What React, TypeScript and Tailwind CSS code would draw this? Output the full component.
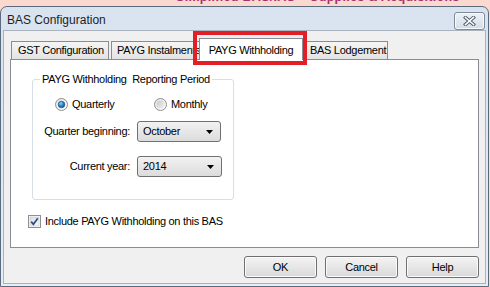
import React from "react";

function Radio({ checked }: { checked?: boolean }) {
  return (
    <svg width="13" height="13" viewBox="0 0 13 13" className="shrink-0">
      <defs>
        <linearGradient id={checked ? "rbg1" : "rbg0"} x1="0" y1="0" x2="1" y2="1">
          <stop offset="0" stopColor="#e2e2e2" />
          <stop offset="1" stopColor="#ffffff" />
        </linearGradient>
        <radialGradient id="rdot" cx="0.4" cy="0.35" r="0.7">
          <stop offset="0" stopColor="#8fd9ff" />
          <stop offset="0.5" stopColor="#2d86c7" />
          <stop offset="1" stopColor="#174d86" />
        </radialGradient>
        <linearGradient id="rgray" x1="0" y1="0" x2="1" y2="1">
          <stop offset="0" stopColor="#c9c9c9" />
          <stop offset="1" stopColor="#f3f3f3" />
        </linearGradient>
      </defs>
      <circle cx="6.5" cy="6.5" r="6" fill={`url(#${checked ? "rbg1" : "rbg0"})`} stroke="#8e8f8f" />
      {checked ? (
        <circle cx="6.5" cy="6.5" r="3.3" fill="url(#rdot)" stroke="#1f4f7f" strokeWidth="0.6" />
      ) : (
        <circle cx="6.5" cy="6.5" r="4" fill="url(#rgray)" />
      )}
    </svg>
  );
}

function Combo({ value, width }: { value: string; width: string }) {
  return (
    <div
      className={`${width} h-[21px] flex items-center justify-between pl-[5px] pr-[7px] rounded-[3px] border border-[#707070] bg-gradient-to-b from-[#f2f2f2] to-[#dcdcdc]`}
    >
      <span>{value}</span>
      <svg width="7" height="4" viewBox="0 0 7 4">
        <polygon points="0,0 7,0 3.5,4" fill="#000" />
      </svg>
    </div>
  );
}

function Button({ label }: { label: string }) {
  return (
    <div className="w-[73px] h-[22px] flex items-center justify-center rounded-[3px] border border-[#707070] bg-gradient-to-b from-[#f4f4f4] to-[#d9d9d9] shadow-[inset_0_0_0_1px_#fbfbfb]">
      {label}
    </div>
  );
}

export default function App() {
  return (
    <div className="relative w-[490px] h-[287px] overflow-hidden bg-[#fcd9cf] font-['Liberation_Sans',Arial,sans-serif] text-black">
      {/* page behind the dialog, mostly hidden */}
      <div className="h-[6px] overflow-hidden pl-[176px]">
        <div className="-mt-[9px] text-[12.5px] font-bold leading-[12px] tracking-[0.3px] text-[#a3326f] whitespace-nowrap">
          Simplified BAS/IAS – Supplies &amp; Acquisitions
        </div>
      </div>

      {/* dialog window */}
      <div className="w-[489px] h-[281px] flex flex-col rounded-t-[7px] border border-[#5b6b7e] bg-gradient-to-b from-[#d8e3ef] to-[#e6edf5]">
        <div className="h-[23px] flex items-center justify-between pl-[6px] pr-[3px]">
          <span className="text-[12px] text-[#1e1e1e] mt-[2px]">BAS Configuration</span>
          <div className="w-[31px] h-[18px] mt-[4px] flex items-center justify-center rounded-[3px] border border-[#7d8a99] bg-gradient-to-b from-[#eef2f7] to-[#d3dce7] shadow-[inset_0_0_0_1px_#f7f9fc]">
            <svg width="13" height="10" viewBox="0 0 13 10">
              <path d="M2.5 1.5 L10.5 8.5 M10.5 1.5 L2.5 8.5" stroke="#4d5866" strokeWidth="3.4" strokeLinecap="square" />
              <path d="M2.5 1.5 L10.5 8.5 M10.5 1.5 L2.5 8.5" stroke="#ffffff" strokeWidth="1.6" strokeLinecap="square" />
            </svg>
          </div>
        </div>

        <div className="flex-1 mx-[2px] mb-[2px] flex flex-col pt-[7px] px-[6px] bg-[#f0f0f0] border border-[#a9b3be] text-[11px] tracking-[-0.3px]">
          {/* tabs */}
          <div className="h-[21px] flex items-end">
            <div className="ml-[1px] w-[98px] h-[18px] pl-[6px] flex items-center border border-b-0 border-[#898c95] bg-gradient-to-b from-[#f5f5f5] to-[#e3e3e3] whitespace-nowrap overflow-hidden">
              GST Configuration
            </div>
            <div className="ml-[2px] w-[90px] h-[18px] pl-[5px] flex items-center border border-b-0 border-[#898c95] bg-gradient-to-b from-[#f5f5f5] to-[#e3e3e3] whitespace-nowrap overflow-hidden">
              PAYG Instalments
            </div>
            <div className="-ml-[2px] -mb-[1px] w-[104px] h-[22px] relative z-10 flex items-start justify-center pt-[3px] border border-b-0 border-[#898c95] bg-white whitespace-nowrap">
              PAYG Withholding
            </div>
            <div className="-ml-[2px] w-[87px] h-[18px] pl-[8px] flex items-center border border-b-0 border-[#898c95] bg-gradient-to-b from-[#f5f5f5] to-[#e3e3e3] whitespace-nowrap overflow-hidden">
              BAS Lodgement
            </div>
          </div>

          {/* tab page */}
          <div className="h-[189px] border border-[#898c95] bg-white pt-[19px] pl-[18px]">
            <div className="relative ml-[3px] w-[202px] h-[121px] rounded-[3px] border border-[#d5dfe5] pt-[17px]">
              <span className="absolute left-[7px] -top-[7px] bg-white px-[2px] leading-[13px] whitespace-pre">
                PAYG Withholding  Reporting Period
              </span>
              <div className="flex items-center h-[14px] pl-[22px]">
                <Radio checked />
                <span className="ml-[4px] w-[82px]">Quarterly</span>
                <Radio />
                <span className="ml-[4px]">Monthly</span>
              </div>
              <div className="mt-[10px] flex items-center">
                <span className="w-[97px] text-right">Quarter beginning:</span>
                <div className="ml-[7px]">
                  <Combo value="October" width="w-[84px]" />
                </div>
              </div>
              <div className="mt-[14px] flex items-center">
                <span className="w-[97px] text-right">Current year:</span>
                <div className="ml-[7px]">
                  <Combo value="2014" width="w-[85px]" />
                </div>
              </div>
            </div>

            <div className="mt-[13px] -ml-[1px] flex items-center">
              <svg width="13" height="13" viewBox="0 0 13 13" className="shrink-0">
                <defs>
                  <linearGradient id="cbg" x1="0" y1="0" x2="1" y2="1">
                    <stop offset="0" stopColor="#d9dde3" />
                    <stop offset="1" stopColor="#fafafa" />
                  </linearGradient>
                </defs>
                <rect x="0.5" y="0.5" width="12" height="12" fill="#fff" stroke="#8e8f8f" />
                <rect x="2" y="2" width="9" height="9" fill="url(#cbg)" stroke="#b8bcc3" strokeWidth="0.5" />
                <path d="M3.2 6.6 L5.4 9.3 L9.8 3.2" fill="none" stroke="#2b4e8a" strokeWidth="1.7" />
              </svg>
              <span className="ml-[4px]">Include PAYG Withholding on this BAS</span>
            </div>
          </div>

          {/* buttons */}
          <div className="mt-[8px] flex justify-end gap-[8px]">
            <Button label="OK" />
            <Button label="Cancel" />
            <Button label="Help" />
          </div>
        </div>
      </div>

      {/* red highlight drawn over the selected tab */}
      <div className="absolute left-[193px] top-[31px] w-[114px] h-[34px] border-[4px] border-[#e21f26]" />
    </div>
  );
}
